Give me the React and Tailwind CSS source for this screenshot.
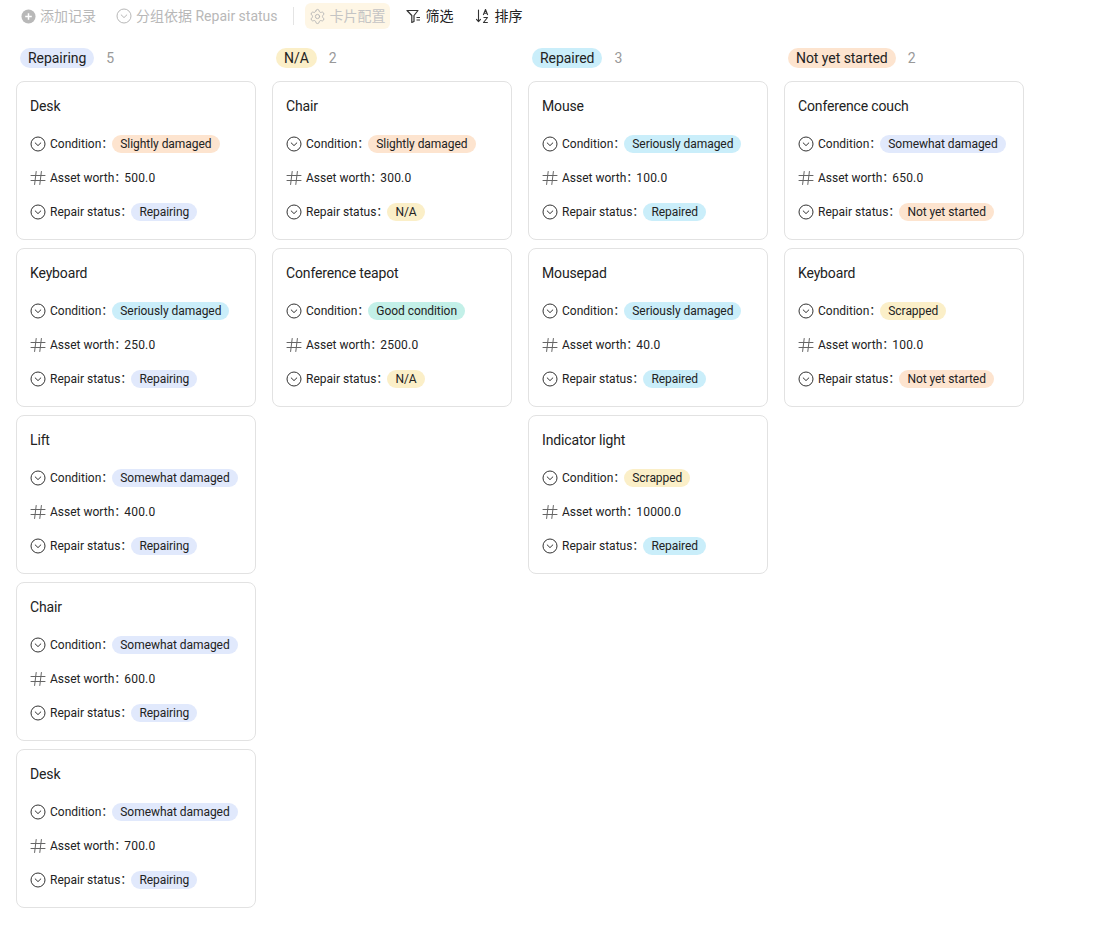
import React from 'react';
import { Settings } from 'lucide-react';

const TAG = {
  blue: 'bg-[#e1e9fc]',
  orange: 'bg-[#fde4cf]',
  yellow: 'bg-[#fbefc8]',
  cyan: 'bg-[#caeefa]',
  green: 'bg-[#c3f0e8]',
};
const CONDITION = {
  'Slightly damaged': 'orange',
  'Seriously damaged': 'cyan',
  'Somewhat damaged': 'blue',
  'Good condition': 'green',
  'Scrapped': 'yellow',
};
const COLUMNS = [
  { name: 'Repairing', color: 'blue', cards: [
    ['Desk', 'Slightly damaged', '500.0'],
    ['Keyboard', 'Seriously damaged', '250.0'],
    ['Lift', 'Somewhat damaged', '400.0'],
    ['Chair', 'Somewhat damaged', '600.0'],
    ['Desk', 'Somewhat damaged', '700.0'],
  ]},
  { name: 'N/A', color: 'yellow', cards: [
    ['Chair', 'Slightly damaged', '300.0'],
    ['Conference teapot', 'Good condition', '2500.0'],
  ]},
  { name: 'Repaired', color: 'cyan', cards: [
    ['Mouse', 'Seriously damaged', '100.0'],
    ['Mousepad', 'Seriously damaged', '40.0'],
    ['Indicator light', 'Scrapped', '10000.0'],
  ]},
  { name: 'Not yet started', color: 'orange', cards: [
    ['Conference couch', 'Somewhat damaged', '650.0'],
    ['Keyboard', 'Scrapped', '100.0'],
  ]},
];

function ChevronCircle({ className = 'text-[#333]', size = 16 }) {
  return (
    <svg width={size} height={size} viewBox="0 0 16 16" fill="none" stroke="currentColor" strokeWidth="1" className={`shrink-0 ${className}`}>
      <circle cx="8" cy="8" r="7" />
      <path d="M5.2 6.9 8 9.6l2.8-2.7" strokeLinecap="round" strokeLinejoin="round" />
    </svg>
  );
}
function Hash() {
  return (
    <svg width="16" height="16" viewBox="0 0 16 16" fill="none" stroke="#666" strokeWidth="1" className="shrink-0">
      <path d="M1 5.5h14M1 10.5h14M6.2 1.5 4.6 14.5M11.4 1.5 9.8 14.5" strokeLinecap="round" />
    </svg>
  );
}
function Tag({ color, children }) {
  return <span className={`-ml-px inline-flex h-[18px] items-center whitespace-nowrap rounded-[9px] px-2 text-xs leading-[18px] tracking-[-0.05px] text-[#222] ${TAG[color]}`}>{children}</span>;
}
function Row({ icon, label, value, children }) {
  return (
    <div className="flex h-[18px] items-center text-xs text-[#222]">
      {icon}
      <span className="ml-1 whitespace-pre">{label}</span>
      {value && <span className="-ml-[2px] tracking-[0.2px]">{value}</span>}
      {children}
    </div>
  );
}
function Card({ title, condition, worth, status }) {
  return (
    <div className="flex h-[159px] w-[240px] flex-col rounded-lg border border-[#e2e2e2] bg-white px-[13px] pt-[15px]">
      <div className="h-[18px] text-sm leading-[18px] tracking-[-0.15px] text-[#222]">{title}</div>
      <div className="mt-5 flex flex-col gap-4">
        <Row icon={<ChevronCircle />} label="Condition：">
          <Tag color={CONDITION[condition]}>{condition}</Tag>
        </Row>
        <Row icon={<Hash />} label="Asset worth：" value={worth} />
        <Row icon={<ChevronCircle />} label="Repair status：">
          <Tag color={status.color}>{status.name}</Tag>
        </Row>
      </div>
    </div>
  );
}
function Column({ col }) {
  return (
    <div className="flex w-[240px] flex-col">
      <div className="flex h-[20px] items-center pl-1">
        <span className={`inline-flex h-[20px] items-center rounded-[10px] px-2 text-sm tracking-[-0.05px] text-[#222] ${TAG[col.color]}`}>{col.name}</span>
        <span className="ml-3 text-sm text-[#999]">{col.cards.length}</span>
      </div>
      <div className="mt-[13px] flex flex-col gap-2">
        {col.cards.map(([title, condition, worth], i) => (
          <Card key={i} title={title} condition={condition} worth={worth} status={col} />
        ))}
      </div>
    </div>
  );
}

export default function App() {
  return (
    <div className="min-h-[936px] bg-white font-['Roboto','Noto_Sans_CJK_SC',sans-serif]">
      <div className="flex h-8 items-center pl-[21px] text-sm">
        <div className="flex items-center text-[#b8b8b8]">
          <svg width="15" height="15" viewBox="0 0 16 16" className="shrink-0">
            <circle cx="8" cy="8" r="7.5" fill="#b8b8b8" />
            <path d="M8 4.5v7M4.5 8h7" stroke="#fff" strokeWidth="1.6" />
          </svg>
          <span className="ml-1">添加记录</span>
        </div>
        <div className="ml-5 flex items-center text-[#b8b8b8]">
          <ChevronCircle className="text-[#b8b8b8]" />
          <span className="ml-1">分组依据 Repair status</span>
        </div>
        <div className="ml-[15px] h-[18px] w-px bg-[#e4e4e4]" />
        <div className="ml-[11px] flex h-[26px] items-center rounded-md bg-[#fef6e5] px-1 text-[#c4c4c4]">
          <Settings size={17} strokeWidth={1.3} color="#b5b5b5" className="shrink-0" />
          <span className="ml-1">卡片配置</span>
        </div>
        <div className="ml-[16px] flex items-center text-[#222]">
          <svg width="16" height="16" viewBox="0 0 16 16" fill="none" stroke="#333" strokeWidth="1.2" className="shrink-0">
            <path d="M1 2.5h11L8 7.5v6l-2.2 1V7.5z" strokeLinejoin="round" />
            <path d="M10.5 9.5h3.5M10.5 12h3.5" />
          </svg>
          <span className="ml-1">筛选</span>
        </div>
        <div className="ml-[21px] flex items-center text-[#222]">
          <svg width="16" height="16" viewBox="0 0 16 16" fill="none" stroke="#333" strokeWidth="1.1" className="shrink-0">
            <path d="M3.5 2v11.5M1.5 11.3l2 2.4 2-2.4" strokeLinecap="round" strokeLinejoin="round" />
            <path d="M8.3 7l2.2-5.5L12.7 7M9.1 5.2h2.8M8.5 9.5h4l-4 5h4.3" strokeLinejoin="round" />
          </svg>
          <span className="ml-1">排序</span>
        </div>
      </div>
      <div className="mt-4 flex gap-4 pl-4">
        {COLUMNS.map((c) => <Column key={c.name} col={c} />)}
      </div>
    </div>
  );
}
